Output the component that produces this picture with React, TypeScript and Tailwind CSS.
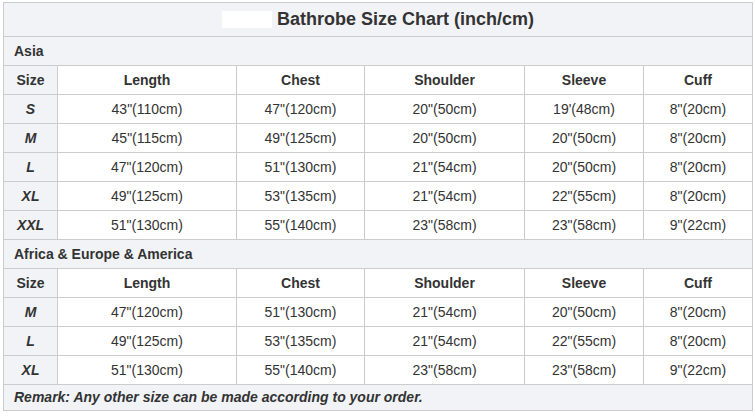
const asia = [
  ["S", `43"(110cm)`, `47"(120cm)`, `20"(50cm)`, `19'(48cm)`, `8"(20cm)`],
  ["M", `45"(115cm)`, `49"(125cm)`, `20"(50cm)`, `20"(50cm)`, `8"(20cm)`],
  ["L", `47"(120cm)`, `51"(130cm)`, `21"(54cm)`, `20"(50cm)`, `8"(20cm)`],
  ["XL", `49"(125cm)`, `53"(135cm)`, `21"(54cm)`, `22"(55cm)`, `8"(20cm)`],
  ["XXL", `51"(130cm)`, `55"(140cm)`, `23"(58cm)`, `23"(58cm)`, `9"(22cm)`],
];

const western = [
  ["M", `47"(120cm)`, `51"(130cm)`, `21"(54cm)`, `20"(50cm)`, `8"(20cm)`],
  ["L", `49"(125cm)`, `53"(135cm)`, `21"(54cm)`, `22"(55cm)`, `8"(20cm)`],
  ["XL", `51"(130cm)`, `55"(140cm)`, `23"(58cm)`, `23"(58cm)`, `9"(22cm)`],
];

const heads = ["Length", "Chest", "Shoulder", "Sleeve", "Cuff"];

function Section({ label, rows }: { label: string; rows: string[][] }) {
  return (
    <>
      <div className="col-span-6 h-[28px] bg-[#f2f3f7] flex items-center pl-[10px] font-bold">
        {label}
      </div>
      <div className="h-[28px] bg-[#f2f3f7] flex items-center justify-center font-bold">Size</div>
      {heads.map((h) => (
        <div key={h} className="h-[28px] bg-white flex items-center justify-center font-bold">
          {h}
        </div>
      ))}
      {rows.map((r) => (
        <div key={r[0]} className="contents">
          <div className="h-[28px] bg-[#f2f3f7] flex items-center justify-center font-bold italic">
            {r[0]}
          </div>
          {r.slice(1).map((v, i) => (
            <div key={i} className="h-[28px] bg-white flex items-center justify-center">
              {v}
            </div>
          ))}
        </div>
      ))}
    </>
  );
}

export default function App() {
  return (
    <div className="w-[755px] h-[418px] bg-white pt-[2px] pl-[3px] font-['Liberation_Sans',Arial,sans-serif] text-[14px] text-[#333]">
      <div className="w-[750px] bg-[#cccccc] p-px grid grid-cols-[53px_178px_127px_159px_118px_108px] gap-px">
        {/* Title */}
        <div className="col-span-6 h-[33px] bg-[#f2f3f7] flex items-center justify-center gap-[5px]">
          <span className="w-[50px] h-[17px] bg-white" />
          <span className="text-[18px] font-bold">Bathrobe Size Chart (inch/cm)</span>
        </div>

        <Section label="Asia" rows={asia} />
        <Section label="Africa & Europe & America" rows={western} />

        {/* Remark */}
        <div className="col-span-6 h-[25px] bg-[#f2f3f7] flex items-center pl-[10px] font-bold italic">
          Remark: Any other size can be made according to your order.
        </div>
      </div>
    </div>
  );
}
